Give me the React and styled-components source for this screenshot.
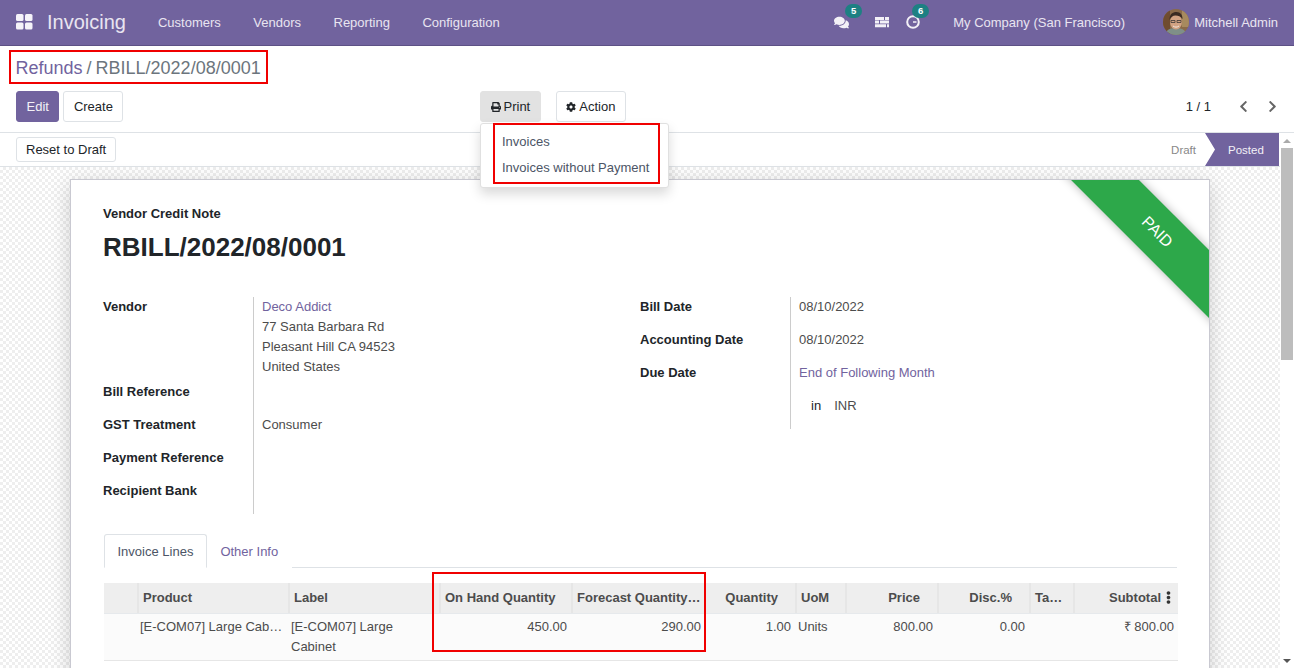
import React from 'react';
import styled, { createGlobalStyle } from 'styled-components';
import { FaComments, FaPrint, FaCog, FaChevronLeft, FaChevronRight, FaEllipsisV } from 'react-icons/fa';

const PURPLE = '#71639e';

const Global = createGlobalStyle`
    html, body{
        margin: 0;
        height: 668px;
        overflow: hidden;
        background: white;
        font-family: "Liberation Sans", Arial, sans-serif;
        font-size: 13px;
        color: #4c4c4c;
    }
    *{ box-sizing: border-box; }
`

const Page = styled.div`
    display: flex;
    flex-direction: column;
    height: 668px;
    overflow: hidden;
`

const Navbar = styled.nav`
    flex: none;
    display: flex;
    align-items: center;
    height: 46px;
    padding: 0 16px 1px;
    background: ${PURPLE};
    border-bottom: 1px solid #5d5185;
    color: #e9e5f1;
`

const Brand = styled.span`
    margin: 0 32px 0 14px;
    font-size: 20px;
`

const NavMenu = styled.div`
    display: flex;
    gap: 32.5px;
`

const NavTools = styled.div`
    display: flex;
    align-items: center;
    margin-left: auto;
`

const IconSlot = styled.span`
    position: relative;
    display: flex;
    align-items: center;
    width: ${p => p.$w}px;
    color: #f3f1f7;
`

const Badge = styled.span`
    position: absolute;
    left: ${p => p.$left}px;
    top: -11px;
    width: 17px;
    height: 14px;
    border-radius: 7px;
    background: #1d8083;
    color: white;
    font-size: 9.5px;
    font-weight: bold;
    line-height: 13px;
    text-align: center;
`

const Company = styled.span`
    margin-left: 7px;
    margin-right: 38px;
`

const UserName = styled.span`
    margin-left: 5px;
`

const ControlPanel = styled.div`
    flex: none;
    height: 87px;
    padding: 4px 16px 0;
    border-bottom: 1px solid #dee2e6;
`

const RedBox = styled.div`
    border: 2.5px solid #f00000;
`

const BreadcrumbBox = styled(RedBox)`
    display: inline-block;
    margin-left: -7px;
    width: 259px;
    height: 34px;
    padding-left: 4.5px;
    font-size: 18px;
    line-height: 33px;
    white-space: nowrap;
`

const Crumb = styled.span`
    color: ${p => p.$link ? PURPLE : '#6c757d'};
`

const Slash = styled.span`
    margin: 0 4px;
    color: #6c757d;
`

const ButtonRow = styled.div`
    display: grid;
    grid-template-columns: 464px auto 1fr;
    margin-top: 7px;
`

const ButtonGroup = styled.div`
    position: relative;
    display: flex;
    gap: ${p => p.$gap}px;
`

const Button = styled.button`
    display: flex;
    align-items: center;
    gap: 3px;
    height: ${p => p.$short ? 25 : 31}px;
    padding: 0 ${p => p.$short ? 9 : 9.5}px;
    border: 1px solid ${p => p.$primary ? PURPLE : p.$active ? '#e2e2e2' : '#dee2e6'};
    border-radius: 3px;
    background: ${p => p.$primary ? PURPLE : p.$active ? '#e2e2e2' : 'white'};
    color: ${p => p.$primary ? '#f3f1f7' : '#212529'};
    font: inherit;
`

const Dropdown = styled.div`
    position: absolute;
    z-index: 5;
    top: 32px;
    left: 0;
    width: 189px;
    height: 65px;
    padding-left: 12px;
    background: white;
    border: 1px solid #e0e0e0;
    border-radius: 3px;
    box-shadow: 0 6px 12px rgba(0, 0, 0, .15);
`

const DropdownBox = styled(RedBox)`
    width: 167px;
    height: 61px;
    margin-top: -1px;
    padding: 4px 0 0 7px;
`

const DropdownItem = styled.div`
    height: 26px;
    line-height: 26px;
    white-space: nowrap;
    color: #4c5566;
`

const Pager = styled.div`
    display: flex;
    justify-content: flex-end;
    align-items: center;
    height: 31px;
    margin-right: -1px;
    color: #212529;
`

const PagerText = styled.span`
    margin-right: 26px;
`

const PagerArrow = styled.span`
    display: flex;
    margin-left: ${p => p.$gap}px;
    color: #666;
    font-size: 13px;
`

const Body = styled.div`
    flex: 1;
    display: flex;
    min-height: 0;
`

const Main = styled.div`
    flex: 1;
    min-width: 0;
    overflow: hidden;
`

const Statusbar = styled.div`
    display: flex;
    justify-content: space-between;
    align-items: center;
    height: 34px;
    padding: 0 1px 0 16px;
    border-bottom: 1px solid #dee2e6;
`

const Stages = styled.div`
    display: flex;
    align-items: center;
    height: 33px;
    font-size: 11.5px;
`

const Stage = styled.span`
    color: #888;
    margin-right: 9px;
`

const ActiveStage = styled.span`
    display: flex;
    align-items: center;
    height: 33px;
    width: 74px;
    padding-left: 23px;
    background: ${PURPLE};
    color: #f3f1f7;
    clip-path: polygon(0 0, 100% 0, 100% 100%, 0 100%, 10px 50%);
`

const SheetArea = styled.div`
    height: 600px;
    padding-top: 12px;
    background-color: white;
    background-image: repeating-conic-gradient(#eeeeee 0 25%, white 0 50%);
    background-size: 6px 6px;
`

const Sheet = styled.div`
    position: relative;
    width: 1140px;
    height: 700px;
    margin: 0 auto;
    padding: 25px 32px 0;
    background: white;
    border: 1px solid #c9c9d1;
    box-shadow: 0 5px 20px -1px rgba(0, 0, 0, .2);
`

const RibbonClip = styled.div`
    position: absolute;
    top: 0;
    right: 0;
    width: 150px;
    height: 150px;
    overflow: hidden;
`

const Ribbon = styled.div`
    position: absolute;
    left: -52px;
    top: 28px;
    width: 300px;
    height: 48px;
    background: #2da84a;
    color: white;
    font-size: 16px;
    line-height: 48px;
    text-align: center;
    transform: rotate(45deg);
    box-shadow: 0 0 10px rgba(0, 0, 0, .3);
`

const DocType = styled.div`
    color: #212529;
    font-weight: bold;
    line-height: 18px;
`

const DocTitle = styled.h1`
    margin: 6px 0 0;
    color: #212529;
    font-size: 26px;
    font-weight: bold;
    line-height: 36px;
`

const Groups = styled.div`
    display: grid;
    grid-template-columns: 537px 1fr;
    margin-top: 32px;
`

const Group = styled.div`
    display: grid;
    grid-template-columns: 150px 1fr;
    align-content: start;
`

const FieldLabel = styled.div`
    min-height: 33px;
    padding-top: ${p => p.$pad || 0}px;
    color: #212529;
    font-weight: bold;
    line-height: 20px;
`

const FieldValue = styled.div`
    min-height: 33px;
    padding: 0 0 ${p => p.$bottom || 0}px 8px;
    border-left: 1px solid #ccc;
    line-height: ${p => p.$line || 20}px;
`

const FieldLink = styled.a`
    color: ${PURPLE};
`

const InlineLabel = styled.span`
    margin: 0 13px 0 12px;
    color: #212529;
`

const Tabs = styled.div`
    display: flex;
    height: 34px;
    margin: 20px 0 15px 1px;
    border-bottom: 1px solid #dee2e6;
`

const Tab = styled.div`
    height: 34px;
    padding: 0 12.5px;
    line-height: 33px;
    color: ${p => p.$active ? '#4c5566' : PURPLE};
    background: white;
    border: 1px solid ${p => p.$active ? '#dee2e6' : 'transparent'};
    border-bottom-color: ${p => p.$active ? 'white' : 'transparent'};
    border-radius: 3px 3px 0 0;
`

const TableWrap = styled.div`
    position: relative;
    width: 1074px;
    margin-left: 1px;
`

const gridCols = '33px 151px 151px 132px 134px 90px 50px 92px 92px 44px 105px'

const HeadRow = styled.div`
    display: grid;
    grid-template-columns: ${gridCols};
    height: 31px;
    background: #eeeeee;
    border-bottom: 1px solid #e6e9ec;
`

const HeadCell = styled.div`
    position: relative;
    padding: 0 ${p => p.$right ? 17 : 4}px 0 4px;
    border-left: ${p => p.$noLine ? 'none' : '2px solid #e6e6e6'};
    color: #4c4c4c;
    font-weight: bold;
    line-height: 29px;
    text-align: ${p => p.$right ? 'right' : 'left'};
    white-space: nowrap;
    overflow: hidden;
    text-overflow: ellipsis;
`

const MenuDots = styled.span`
    position: absolute;
    right: 3px;
    top: 8px;
    display: flex;
    color: #333;
    font-size: 13px;
`

const BodyRow = styled.div`
    display: grid;
    grid-template-columns: ${gridCols};
    height: 47px;
    background: #fbfbfb;
    border-bottom: 1px solid #e6e6e6;
`

const BodyCell = styled.div`
    padding: 3px 4px 0 ${p => p.$pad || 3}px;
    line-height: 20px;
    text-align: ${p => p.$right ? 'right' : 'left'};
    ${p => p.$clip ? 'white-space: nowrap; overflow: hidden; text-overflow: ellipsis;' : ''}
`

const TableMark = styled(RedBox)`
    position: absolute;
    left: 328px;
    top: -11px;
    width: 274px;
    height: 80px;
    pointer-events: none;
`

const Scrollbar = styled.div`
    flex: none;
    display: flex;
    flex-direction: column;
    align-items: center;
    width: 14px;
    padding: 0 1px;
    background: white;
`

const ScrollArrow = styled.span`
    flex: none;
    display: block;
    width: 0;
    height: 0;
    margin: ${p => p.$down ? 'auto 0 5px' : '6px 0 5px'};
    border-left: 4px solid transparent;
    border-right: 4px solid transparent;
    ${p => p.$down ? 'border-top: 4px solid #555;' : 'border-bottom: 4px solid #aaa;'}
`

const ScrollThumb = styled.div`
    flex: none;
    width: 12px;
    height: 212px;
    background: #bdbdbd;
`

const AppsIcon = () => (
    <svg width="17" height="16" viewBox="0 0 17 16" fill="#f5f3f9">
        <rect x="0" y="0" width="7.5" height="7" rx="1.5" />
        <rect x="9" y="0" width="7.5" height="7" rx="1.5" />
        <rect x="0" y="8.5" width="7.5" height="7" rx="1.5" />
        <rect x="9" y="8.5" width="7.5" height="7" rx="1.5" />
    </svg>
)

const TasksIcon = () => (
    <svg width="14" height="12" viewBox="0 0 14 12" fill="#f3f1f7">
        <path d="M0 1h9v3H0zM10 1h4v3h-4zM0 4.6h4v3H0zM5 4.6h9v3H5zM0 8.2h11v3H0zM12 8.2h2v3h-2z" />
    </svg>
)

const ClockIcon = () => (
    <svg width="14" height="14" viewBox="0 0 14 14" fill="none" stroke="#f3f1f7" strokeWidth="2">
        <circle cx="7" cy="7" r="5.8" />
        <path d="M7 7h3.5" strokeWidth="1.5" />
    </svg>
)

const Avatar = () => (
    <svg width="26" height="26" viewBox="0 0 26 26">
        <clipPath id="avatar-clip"><circle cx="13" cy="13" r="13" /></clipPath>
        <g clipPath="url(#avatar-clip)">
            <rect width="26" height="26" fill="#8a6a48" />
            <rect x="0" y="0" width="7" height="26" fill="#6f4c2f" />
            <rect x="19" y="0" width="7" height="18" fill="#a78a5e" />
            <path d="M2 26c1-6 6-7 11-7s9 1 11 7z" fill="#7f8f88" />
            <ellipse cx="13" cy="13" rx="6" ry="7.5" fill="#d2a383" />
            <path d="M6.5 11c0-6 3-8 7-8s6 3 6 7c-2-3-4-3.500-7-3.500-3 0-4.500 1.500-6 4.500z" fill="#3a2b22" />
            <path d="M8 11.500h4v2H8zM14 11.500h4v2h-4z" fill="none" stroke="#3f3a36" strokeWidth=".8" />
            <path d="M10 17c2 1.500 4 1.500 6 0" stroke="#f4e9df" strokeWidth="1" fill="none" />
        </g>
    </svg>
)

const App = () => (
    <Page>
        <Global />
        <Navbar>
            <AppsIcon />
            <Brand>Invoicing</Brand>
            <NavMenu>
                <span>Customers</span>
                <span>Vendors</span>
                <span>Reporting</span>
                <span>Configuration</span>
            </NavMenu>
            <NavTools>
                <IconSlot $w={41}>
                    <FaComments size={15} />
                    <Badge $left={11}>5</Badge>
                </IconSlot>
                <IconSlot $w={31}><TasksIcon /></IconSlot>
                <IconSlot $w={40}>
                    <ClockIcon />
                    <Badge $left={6}>6</Badge>
                </IconSlot>
                <Company>My Company (San Francisco)</Company>
                <Avatar />
                <UserName>Mitchell Admin</UserName>
            </NavTools>
        </Navbar>

        <ControlPanel>
            <BreadcrumbBox>
                <Crumb $link>Refunds</Crumb><Slash>/</Slash><Crumb>RBILL/2022/08/0001</Crumb>
            </BreadcrumbBox>
            <ButtonRow>
                <ButtonGroup $gap={4}>
                    <Button $primary>Edit</Button>
                    <Button>Create</Button>
                </ButtonGroup>
                <ButtonGroup $gap={15}>
                    <Button $active><FaPrint size={10} /> Print</Button>
                    <Button><FaCog size={10} /> Action</Button>
                    <Dropdown>
                        <DropdownBox>
                            <DropdownItem>Invoices</DropdownItem>
                            <DropdownItem>Invoices without Payment</DropdownItem>
                        </DropdownBox>
                    </Dropdown>
                </ButtonGroup>
                <Pager>
                    <PagerText>1 / 1</PagerText>
                    <PagerArrow $gap={0}><FaChevronLeft /></PagerArrow>
                    <PagerArrow $gap={16}><FaChevronRight /></PagerArrow>
                </Pager>
            </ButtonRow>
        </ControlPanel>

        <Body>
            <Main>
                <Statusbar>
                    <Button $short>Reset to Draft</Button>
                    <Stages>
                        <Stage>Draft</Stage>
                        <ActiveStage>Posted</ActiveStage>
                    </Stages>
                </Statusbar>
                <SheetArea>
                    <Sheet>
                        <RibbonClip><Ribbon>PAID</Ribbon></RibbonClip>
                        <DocType>Vendor Credit Note</DocType>
                        <DocTitle>RBILL/2022/08/0001</DocTitle>
                        <Groups>
                            <Group>
                                <FieldLabel>Vendor</FieldLabel>
                                <FieldValue $bottom={5}>
                                    <FieldLink>Deco Addict</FieldLink><br />
                                    77 Santa Barbara Rd<br />
                                    Pleasant Hill CA 94523<br />
                                    United States
                                </FieldValue>
                                <FieldLabel>Bill Reference</FieldLabel>
                                <FieldValue />
                                <FieldLabel>GST Treatment</FieldLabel>
                                <FieldValue>Consumer</FieldValue>
                                <FieldLabel>Payment Reference</FieldLabel>
                                <FieldValue />
                                <FieldLabel>Recipient Bank</FieldLabel>
                                <FieldValue />
                            </Group>
                            <Group>
                                <FieldLabel>Bill Date</FieldLabel>
                                <FieldValue>08/10/2022</FieldValue>
                                <FieldLabel>Accounting Date</FieldLabel>
                                <FieldValue>08/10/2022</FieldValue>
                                <FieldLabel>Due Date</FieldLabel>
                                <FieldValue><FieldLink>End of Following Month</FieldLink></FieldValue>
                                <FieldLabel />
                                <FieldValue><InlineLabel>in</InlineLabel>INR</FieldValue>
                            </Group>
                        </Groups>
                        <Tabs>
                            <Tab $active>Invoice Lines</Tab>
                            <Tab>Other Info</Tab>
                        </Tabs>
                        <TableWrap>
                            <HeadRow>
                                <HeadCell $noLine />
                                <HeadCell>Product</HeadCell>
                                <HeadCell>Label</HeadCell>
                                <HeadCell>On Hand Quantity</HeadCell>
                                <HeadCell>Forecast Quantity at Date</HeadCell>
                                <HeadCell $right $noLine>Quantity</HeadCell>
                                <HeadCell>UoM</HeadCell>
                                <HeadCell $right>Price</HeadCell>
                                <HeadCell $right>Disc.%</HeadCell>
                                <HeadCell>Taxes</HeadCell>
                                <HeadCell $right>
                                    <span>Subtotal</span>
                                    <MenuDots><FaEllipsisV /></MenuDots>
                                </HeadCell>
                            </HeadRow>
                            <BodyRow>
                                <BodyCell />
                                <BodyCell $clip>[E-COM07] Large Cabinet</BodyCell>
                                <BodyCell>[E-COM07] Large Cabinet</BodyCell>
                                <BodyCell $right>450.00</BodyCell>
                                <BodyCell $right $pad={3}>290.00</BodyCell>
                                <BodyCell $right>1.00</BodyCell>
                                <BodyCell>Units</BodyCell>
                                <BodyCell $right>800.00</BodyCell>
                                <BodyCell $right>0.00</BodyCell>
                                <BodyCell />
                                <BodyCell $right>₹ 800.00</BodyCell>
                            </BodyRow>
                            <TableMark />
                        </TableWrap>
                    </Sheet>
                </SheetArea>
            </Main>
            <Scrollbar>
                <ScrollArrow />
                <ScrollThumb />
                <ScrollArrow $down />
            </Scrollbar>
        </Body>
    </Page>
)

export default App;
